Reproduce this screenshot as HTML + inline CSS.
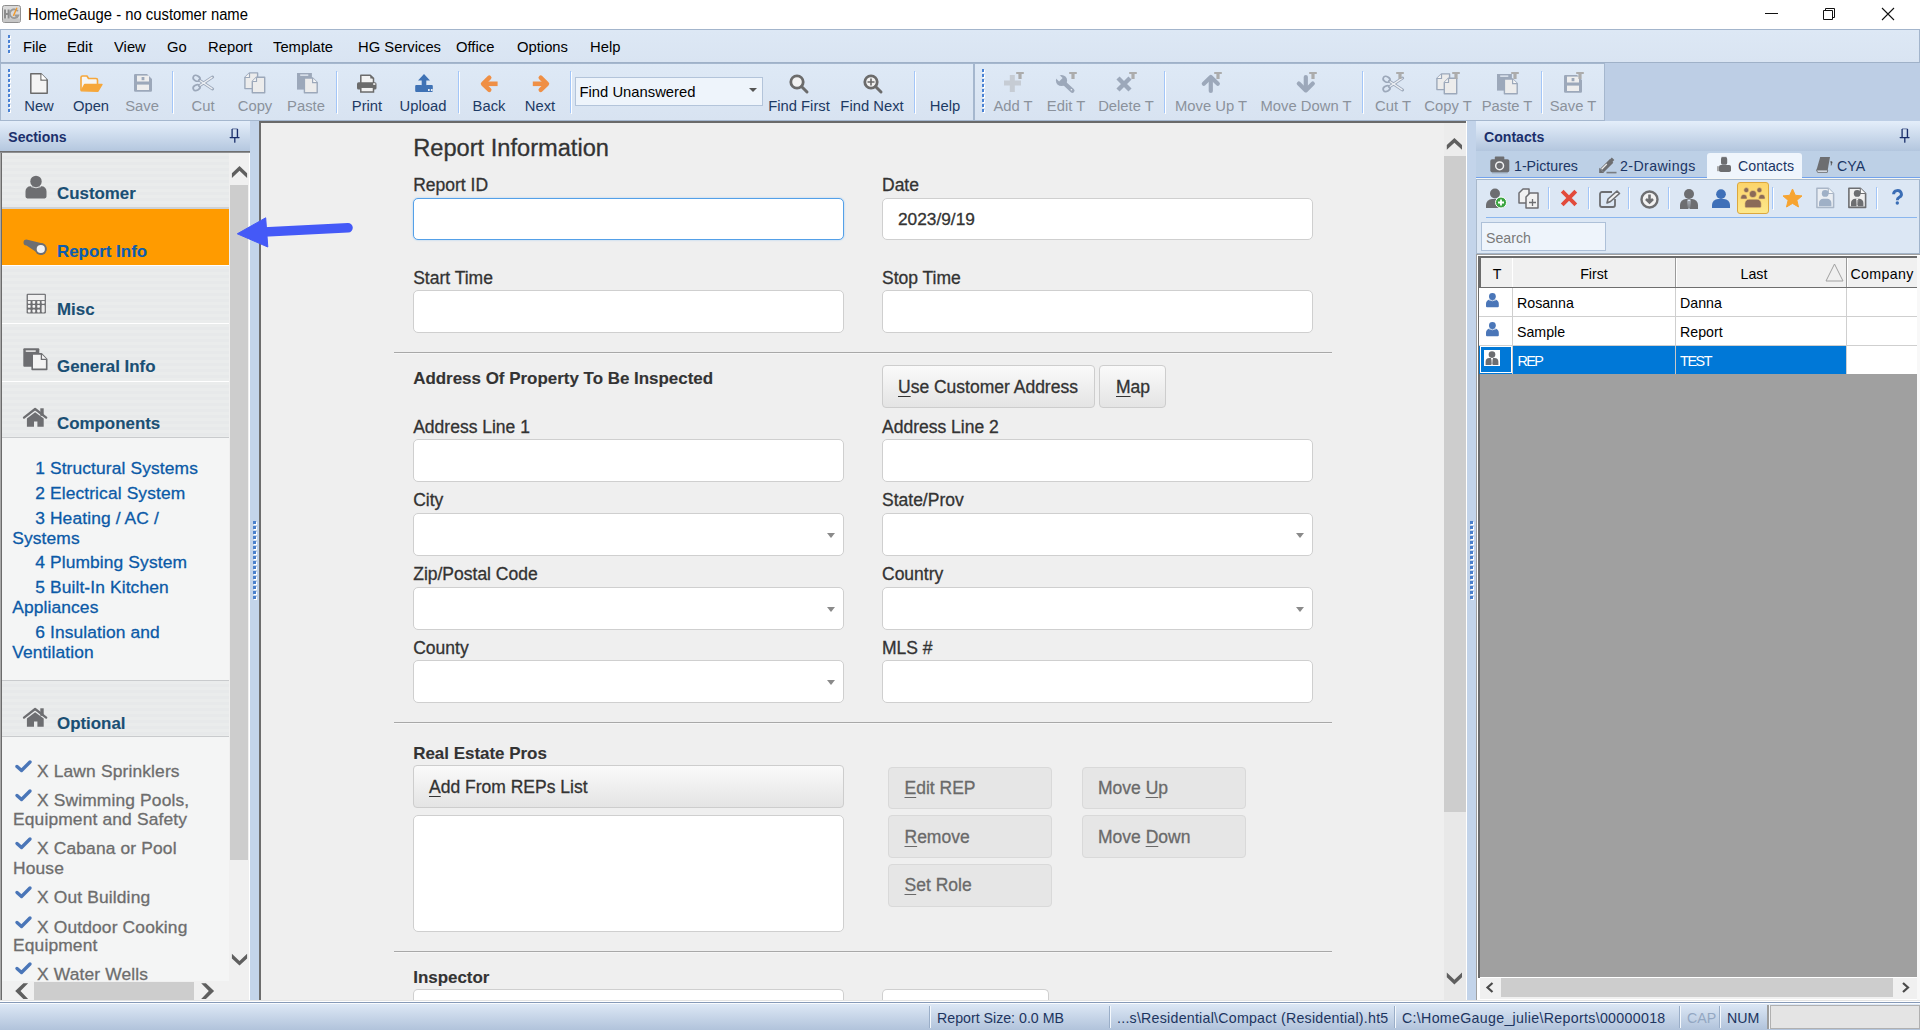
<!DOCTYPE html><html><head><meta charset="utf-8"><style>
html,body{margin:0;padding:0;width:1920px;height:1030px;overflow:hidden;background:#f0f0f0;}
body{position:relative;font-family:"Liberation Sans",sans-serif;}
.t{position:absolute;white-space:nowrap;line-height:1;}
.r{position:absolute;box-sizing:border-box;}
svg.r{overflow:visible}
</style></head><body>
<div class="r" style="left:0px;top:0px;width:1920px;height:29px;background:#fff"></div>
<svg class="r" style="left:2px;top:5px" width="20" height="18" viewBox="0 0 20 18"><rect x="0.5" y="0.5" width="18" height="17" rx="2" fill="#dadada" stroke="#8f8f8f"/><rect x="1" y="13.5" width="17" height="3.5" rx="1" fill="#c6c6c6"/><path d="M3 4.5v9M6.6 4.5v9M3 9h3.6" stroke="#8c8c8c" stroke-width="2"/><path d="M15.8 6.2A4.4 4.4 0 1 0 16.2 10.5H12.8" fill="none" stroke="#9a9a9a" stroke-width="1.9"/><path d="M11.4 10.9L14.9 2.8" stroke="#f39a2a" stroke-width="1.4"/></svg>
<div class="t" style="left:27.5px;top:6.97px;font-size:15.5715px;color:#000;transform:scaleX(0.9524);transform-origin:left top;">HomeGauge - no customer name</div>
<div class="r" style="left:1765px;top:13px;width:13px;height:1px;background:#111"></div>
<svg class="r" style="left:1822px;top:6px" width="15" height="15" viewBox="0 0 15 15"><path d="M1.5 4.5h9v9h-9z M3.5 4.5v-2h9v9h-2" fill="none" stroke="#111" stroke-width="1"/></svg>
<svg class="r" style="left:1881px;top:6.5px" width="15" height="15" viewBox="0 0 15 15"><path d="M1 1L13 13M13 1L1 13" stroke="#111" stroke-width="1.1"/></svg>
<div class="r" style="left:0px;top:29px;width:1920px;height:34px;background:linear-gradient(#dde8f5,#d9e4f2);border-top:1px solid #a3b5cc;border-bottom:1px solid #9fb1c8;border-left:1px solid #a3b5cc;border-right:1px solid #a3b5cc"></div>
<div class="r" style="left:9px;top:36px;width:2px;height:3px;background:#fff"></div>
<div class="r" style="left:8px;top:35px;width:2px;height:3px;background:#4a82d4"></div>
<div class="r" style="left:9px;top:41px;width:2px;height:3px;background:#fff"></div>
<div class="r" style="left:8px;top:40px;width:2px;height:3px;background:#4a82d4"></div>
<div class="r" style="left:9px;top:46px;width:2px;height:3px;background:#fff"></div>
<div class="r" style="left:8px;top:45px;width:2px;height:3px;background:#4a82d4"></div>
<div class="r" style="left:9px;top:51px;width:2px;height:3px;background:#fff"></div>
<div class="r" style="left:8px;top:50px;width:2px;height:3px;background:#4a82d4"></div>
<div class="t" style="left:23px;top:39.00px;font-size:15.540000000000001px;color:#000;transform:scaleX(0.9524);transform-origin:left top;">File</div>
<div class="t" style="left:67px;top:39.00px;font-size:15.540000000000001px;color:#000;transform:scaleX(0.9524);transform-origin:left top;">Edit</div>
<div class="t" style="left:114px;top:39.00px;font-size:15.540000000000001px;color:#000;transform:scaleX(0.9524);transform-origin:left top;">View</div>
<div class="t" style="left:167px;top:39.00px;font-size:15.540000000000001px;color:#000;transform:scaleX(0.9524);transform-origin:left top;">Go</div>
<div class="t" style="left:207.7px;top:39.00px;font-size:15.540000000000001px;color:#000;transform:scaleX(0.9524);transform-origin:left top;">Report</div>
<div class="t" style="left:273.4px;top:39.00px;font-size:15.540000000000001px;color:#000;transform:scaleX(0.9524);transform-origin:left top;">Template</div>
<div class="t" style="left:357.5px;top:39.00px;font-size:15.540000000000001px;color:#000;transform:scaleX(0.9524);transform-origin:left top;">HG Services</div>
<div class="t" style="left:456px;top:39.00px;font-size:15.540000000000001px;color:#000;transform:scaleX(0.9524);transform-origin:left top;">Office</div>
<div class="t" style="left:517px;top:39.00px;font-size:15.540000000000001px;color:#000;transform:scaleX(0.9524);transform-origin:left top;">Options</div>
<div class="t" style="left:590px;top:39.00px;font-size:15.540000000000001px;color:#000;transform:scaleX(0.9524);transform-origin:left top;">Help</div>
<div class="r" style="left:0px;top:63px;width:1920px;height:58px;background:#bdcee5"></div>
<div class="r" style="left:0px;top:63px;width:974px;height:58px;background:linear-gradient(#deE9f6,#d8e3f1);border:1px solid #a5b7ce"></div>
<div class="r" style="left:974px;top:63px;width:631px;height:58px;background:linear-gradient(#dee9f6,#d8e3f1);border:1px solid #a5b7ce"></div>
<div class="r" style="left:9px;top:70px;width:2px;height:3px;background:#fff"></div>
<div class="r" style="left:8px;top:69px;width:2px;height:3px;background:#4a82d4"></div>
<div class="r" style="left:9px;top:75px;width:2px;height:3px;background:#fff"></div>
<div class="r" style="left:8px;top:74px;width:2px;height:3px;background:#4a82d4"></div>
<div class="r" style="left:9px;top:80px;width:2px;height:3px;background:#fff"></div>
<div class="r" style="left:8px;top:79px;width:2px;height:3px;background:#4a82d4"></div>
<div class="r" style="left:9px;top:85px;width:2px;height:3px;background:#fff"></div>
<div class="r" style="left:8px;top:84px;width:2px;height:3px;background:#4a82d4"></div>
<div class="r" style="left:9px;top:90px;width:2px;height:3px;background:#fff"></div>
<div class="r" style="left:8px;top:89px;width:2px;height:3px;background:#4a82d4"></div>
<div class="r" style="left:9px;top:95px;width:2px;height:3px;background:#fff"></div>
<div class="r" style="left:8px;top:94px;width:2px;height:3px;background:#4a82d4"></div>
<div class="r" style="left:9px;top:100px;width:2px;height:3px;background:#fff"></div>
<div class="r" style="left:8px;top:99px;width:2px;height:3px;background:#4a82d4"></div>
<div class="r" style="left:9px;top:105px;width:2px;height:3px;background:#fff"></div>
<div class="r" style="left:8px;top:104px;width:2px;height:3px;background:#4a82d4"></div>
<div class="r" style="left:9px;top:110px;width:2px;height:3px;background:#fff"></div>
<div class="r" style="left:8px;top:109px;width:2px;height:3px;background:#4a82d4"></div>
<div class="r" style="left:983px;top:70px;width:2px;height:3px;background:#fff"></div>
<div class="r" style="left:982px;top:69px;width:2px;height:3px;background:#4a82d4"></div>
<div class="r" style="left:983px;top:75px;width:2px;height:3px;background:#fff"></div>
<div class="r" style="left:982px;top:74px;width:2px;height:3px;background:#4a82d4"></div>
<div class="r" style="left:983px;top:80px;width:2px;height:3px;background:#fff"></div>
<div class="r" style="left:982px;top:79px;width:2px;height:3px;background:#4a82d4"></div>
<div class="r" style="left:983px;top:85px;width:2px;height:3px;background:#fff"></div>
<div class="r" style="left:982px;top:84px;width:2px;height:3px;background:#4a82d4"></div>
<div class="r" style="left:983px;top:90px;width:2px;height:3px;background:#fff"></div>
<div class="r" style="left:982px;top:89px;width:2px;height:3px;background:#4a82d4"></div>
<div class="r" style="left:983px;top:95px;width:2px;height:3px;background:#fff"></div>
<div class="r" style="left:982px;top:94px;width:2px;height:3px;background:#4a82d4"></div>
<div class="r" style="left:983px;top:100px;width:2px;height:3px;background:#fff"></div>
<div class="r" style="left:982px;top:99px;width:2px;height:3px;background:#4a82d4"></div>
<div class="r" style="left:983px;top:105px;width:2px;height:3px;background:#fff"></div>
<div class="r" style="left:982px;top:104px;width:2px;height:3px;background:#4a82d4"></div>
<div class="r" style="left:983px;top:110px;width:2px;height:3px;background:#fff"></div>
<div class="r" style="left:982px;top:109px;width:2px;height:3px;background:#4a82d4"></div>
<div class="r" style="left:172px;top:71px;width:1px;height:42px;background:#a3c6f8"></div>
<div class="r" style="left:173px;top:72px;width:1px;height:42px;background:#fff"></div>
<div class="r" style="left:336px;top:71px;width:1px;height:42px;background:#a3c6f8"></div>
<div class="r" style="left:337px;top:72px;width:1px;height:42px;background:#fff"></div>
<div class="r" style="left:458px;top:71px;width:1px;height:42px;background:#a3c6f8"></div>
<div class="r" style="left:459px;top:72px;width:1px;height:42px;background:#fff"></div>
<div class="r" style="left:570px;top:71px;width:1px;height:42px;background:#a3c6f8"></div>
<div class="r" style="left:571px;top:72px;width:1px;height:42px;background:#fff"></div>
<div class="r" style="left:914px;top:71px;width:1px;height:42px;background:#a3c6f8"></div>
<div class="r" style="left:915px;top:72px;width:1px;height:42px;background:#fff"></div>
<div class="r" style="left:1164px;top:71px;width:1px;height:42px;background:#a3c6f8"></div>
<div class="r" style="left:1165px;top:72px;width:1px;height:42px;background:#fff"></div>
<div class="r" style="left:1362px;top:71px;width:1px;height:42px;background:#a3c6f8"></div>
<div class="r" style="left:1363px;top:72px;width:1px;height:42px;background:#fff"></div>
<div class="r" style="left:1541px;top:71px;width:1px;height:42px;background:#a3c6f8"></div>
<div class="r" style="left:1542px;top:72px;width:1px;height:42px;background:#fff"></div>
<div class="t" style="left:-261px;width:600px;text-align:center;top:98.00px;font-size:15.540000000000001px;color:#1d3a64;transform:scaleX(0.9524);transform-origin:center top;">New</div>
<div class="t" style="left:-209.5px;width:600px;text-align:center;top:98.00px;font-size:15.540000000000001px;color:#1d3a64;transform:scaleX(0.9524);transform-origin:center top;">Open</div>
<div class="t" style="left:-158px;width:600px;text-align:center;top:98.00px;font-size:15.540000000000001px;color:#8b929c;transform:scaleX(0.9524);transform-origin:center top;">Save</div>
<div class="t" style="left:-97px;width:600px;text-align:center;top:98.00px;font-size:15.540000000000001px;color:#8b929c;transform:scaleX(0.9524);transform-origin:center top;">Cut</div>
<div class="t" style="left:-45.5px;width:600px;text-align:center;top:98.00px;font-size:15.540000000000001px;color:#8b929c;transform:scaleX(0.9524);transform-origin:center top;">Copy</div>
<div class="t" style="left:6px;width:600px;text-align:center;top:98.00px;font-size:15.540000000000001px;color:#8b929c;transform:scaleX(0.9524);transform-origin:center top;">Paste</div>
<div class="t" style="left:66.5px;width:600px;text-align:center;top:98.00px;font-size:15.540000000000001px;color:#1d3a64;transform:scaleX(0.9524);transform-origin:center top;">Print</div>
<div class="t" style="left:123px;width:600px;text-align:center;top:98.00px;font-size:15.540000000000001px;color:#1d3a64;transform:scaleX(0.9524);transform-origin:center top;">Upload</div>
<div class="t" style="left:189px;width:600px;text-align:center;top:98.00px;font-size:15.540000000000001px;color:#1d3a64;transform:scaleX(0.9524);transform-origin:center top;">Back</div>
<div class="t" style="left:240px;width:600px;text-align:center;top:98.00px;font-size:15.540000000000001px;color:#1d3a64;transform:scaleX(0.9524);transform-origin:center top;">Next</div>
<div class="t" style="left:499px;width:600px;text-align:center;top:98.00px;font-size:15.540000000000001px;color:#1d3a64;transform:scaleX(0.9524);transform-origin:center top;">Find First</div>
<div class="t" style="left:572px;width:600px;text-align:center;top:98.00px;font-size:15.540000000000001px;color:#1d3a64;transform:scaleX(0.9524);transform-origin:center top;">Find Next</div>
<div class="t" style="left:644.5px;width:600px;text-align:center;top:98.00px;font-size:15.540000000000001px;color:#1d3a64;transform:scaleX(0.9524);transform-origin:center top;">Help</div>
<div class="t" style="left:713px;width:600px;text-align:center;top:98.00px;font-size:15.540000000000001px;color:#8b929c;transform:scaleX(0.9524);transform-origin:center top;">Add T</div>
<div class="t" style="left:766px;width:600px;text-align:center;top:98.00px;font-size:15.540000000000001px;color:#8b929c;transform:scaleX(0.9524);transform-origin:center top;">Edit T</div>
<div class="t" style="left:826px;width:600px;text-align:center;top:98.00px;font-size:15.540000000000001px;color:#8b929c;transform:scaleX(0.9524);transform-origin:center top;">Delete T</div>
<div class="t" style="left:911px;width:600px;text-align:center;top:98.00px;font-size:15.540000000000001px;color:#8b929c;transform:scaleX(0.9524);transform-origin:center top;">Move Up T</div>
<div class="t" style="left:1006px;width:600px;text-align:center;top:98.00px;font-size:15.540000000000001px;color:#8b929c;transform:scaleX(0.9524);transform-origin:center top;">Move Down T</div>
<div class="t" style="left:1093px;width:600px;text-align:center;top:98.00px;font-size:15.540000000000001px;color:#8b929c;transform:scaleX(0.9524);transform-origin:center top;">Cut T</div>
<div class="t" style="left:1148px;width:600px;text-align:center;top:98.00px;font-size:15.540000000000001px;color:#8b929c;transform:scaleX(0.9524);transform-origin:center top;">Copy T</div>
<div class="t" style="left:1207px;width:600px;text-align:center;top:98.00px;font-size:15.540000000000001px;color:#8b929c;transform:scaleX(0.9524);transform-origin:center top;">Paste T</div>
<div class="t" style="left:1273px;width:600px;text-align:center;top:98.00px;font-size:15.540000000000001px;color:#8b929c;transform:scaleX(0.9524);transform-origin:center top;">Save T</div>
<svg class="r" style="left:30px;top:73px" width="18" height="21" viewBox="0 0 18 21"><path d="M0.8 0.8h10.2l6.2 6.2v13.2H0.8z" fill="#f4f4f4" stroke="#6b6b6b" stroke-width="1.5" stroke-linejoin="round"/><path d="M11 0.8v6.2h6.2" fill="#fff" stroke="#6b6b6b" stroke-width="1.3"/><path d="M11.6 1.6v4.8h4.8z" fill="#fff"/></svg>
<svg class="r" style="left:80px;top:75px" width="23" height="17" viewBox="0 0 23 17"><path d="M1 15.5V2.5a1.5 1.5 0 0 1 1.5-1.5h4.5l1.5 2.5h7.5a1.5 1.5 0 0 1 1.5 1.5V9" fill="#f5f5f5" stroke="#f6a73b" stroke-width="1.6" stroke-linejoin="round"/><path d="M1.2 15.8L4.6 9.5H22l-4.2 6.8z" fill="#f6a73b" stroke="#f6a73b" stroke-width="1.4" stroke-linejoin="round"/></svg>
<svg class="r" style="left:134px;top:74px" width="18" height="18" viewBox="0 0 18 18"><path d="M0 1.2A1.2 1.2 0 0 1 1.2 0H13l5 5v11.6a1.2 1.2 0 0 1-1.2 1.2H1.2A1.2 1.2 0 0 1 0 16.6z" fill="#9ca8ba"/><rect x="3" y="1.6" width="12" height="5.9" fill="#eeeeee"/><rect x="7.6" y="3" width="2.8" height="3.2" fill="#9ca8ba"/><rect x="3" y="10.6" width="12" height="5.4" fill="#eeeeee"/></svg>
<svg class="r" style="left:192px;top:74px" width="22" height="18" viewBox="0 0 22 18"><ellipse cx="4.6" cy="4.3" rx="3.6" ry="2.7" transform="rotate(28 4.6 4.3)" fill="none" stroke="#9ca8ba" stroke-width="1.7"/><ellipse cx="4.6" cy="13.6" rx="3.6" ry="2.7" transform="rotate(-28 4.6 13.6)" fill="none" stroke="#9ca8ba" stroke-width="1.7"/><path d="M7.5 11.8L20.6 3M7.5 6.2L20.6 15" stroke="#9ca8ba" stroke-width="3" stroke-linecap="round"/><path d="M8.2 11.2L20 3.4M8.2 6.8L20 14.6" stroke="#eceff3" stroke-width="1.3" stroke-linecap="round"/></svg>
<svg class="r" style="left:244px;top:72px" width="22" height="22" viewBox="0 0 22 22"><path d="M0.9 5.5L5.5 0.9h8.1v15.7H0.9z" fill="#ececec" stroke="#9ca8ba" stroke-width="1.4" stroke-linejoin="round"/><path d="M0.9 5.5h4.6V0.9" fill="#f7f7f7" stroke="#9ca8ba" stroke-width="1.2"/><path d="M8.3 9.5L12.5 5.2h8.2v15.6H8.3z" fill="#ececec" stroke="#9ca8ba" stroke-width="1.4" stroke-linejoin="round"/><path d="M8.3 9.5h4.2V5.2" fill="#f7f7f7" stroke="#9ca8ba" stroke-width="1.2"/></svg>
<svg class="r" style="left:296px;top:72px" width="22" height="22" viewBox="0 0 22 22"><rect x="1" y="1" width="14.9" height="16.6" fill="#9ca8ba"/><rect x="4.2" y="2.4" width="8.1" height="1.5" fill="#dde4ee"/><path d="M8.4 6h8.2l4.6 4.6v10.2H8.4z" fill="#ececec" stroke="#9ca8ba" stroke-width="1.4" stroke-linejoin="round"/><path d="M16.6 6v4.6h4.6" fill="#f7f7f7" stroke="#9ca8ba" stroke-width="1.2"/></svg>
<svg class="r" style="left:356px;top:74px" width="22" height="19" viewBox="0 0 22 19"><path d="M4.8 9V1.2h9.5l3.2 3.2V9" fill="#f2f2f2" stroke="#6b6b6b" stroke-width="1.5" stroke-linejoin="round"/><path d="M14.3 1.2v3.2h3.2z" fill="#6b6b6b"/><rect x="1" y="8.3" width="19.5" height="7.3" rx="1.6" fill="#6b6b6b"/><rect x="17.2" y="9.2" width="2.1" height="1.7" fill="#f2f2f2"/><rect x="4.8" y="13.2" width="12.7" height="4.8" fill="#f2f2f2" stroke="#6b6b6b" stroke-width="1.5"/></svg>
<svg class="r" style="left:414px;top:73px" width="20" height="20" viewBox="0 0 20 20"><path d="M10 0.9L4 7.6h3.7v6.6h4.6V7.6H16z" fill="#3f72b5"/><path d="M1.2 13a1 1 0 0 1 1-1h5.3q2.5 2.4 5 0h5.3a1 1 0 0 1 1 1v5a1 1 0 0 1-1 1H2.2a1 1 0 0 1-1-1z" fill="#3f72b5"/><rect x="14" y="16" width="1.7" height="2" fill="#e8eef6"/><rect x="16.9" y="16" width="1.7" height="2" fill="#e8eef6"/></svg>
<svg class="r" style="left:480px;top:75px" width="18" height="18" viewBox="0 0 18 18"><path d="M9.3 2.7L3 8.8l6.3 6.1" fill="none" stroke="#ef8f45" stroke-width="4.4" stroke-linecap="round" stroke-linejoin="round"/><path d="M4 8.8h13.6" stroke="#ef8f45" stroke-width="4.6" stroke-linecap="butt"/></svg>
<svg class="r" style="left:532px;top:75px" width="18" height="18" viewBox="0 0 18 18"><path d="M8.7 2.7L15 8.8l-6.3 6.1" fill="none" stroke="#ef8f45" stroke-width="4.4" stroke-linecap="round" stroke-linejoin="round"/><path d="M14 8.8H0.8" stroke="#ef8f45" stroke-width="4.6" stroke-linecap="butt"/></svg>
<div class="r" style="left:575px;top:77px;width:188px;height:29px;background:#eef4fb;border:1px solid #b3c4da"></div>
<div class="t" style="left:579.5px;top:84.77px;font-size:14.8px;color:#000;">Find Unanswered</div>
<svg class="r" style="left:749px;top:88px" width="9" height="5" viewBox="0 0 9 5"><path d="M0 0h8L4 4z" fill="#555"/></svg>
<svg class="r" style="left:789px;top:74px" width="20" height="20" viewBox="0 0 20 20"><circle cx="8" cy="8" r="6.2" fill="#f2f2f2" stroke="#6b6b6b" stroke-width="2.8"/><path d="M12.5 12.5L18 18" stroke="#6b6b6b" stroke-width="3" stroke-linecap="round"/></svg>
<svg class="r" style="left:863px;top:74px" width="20" height="20" viewBox="0 0 20 20"><circle cx="8" cy="8" r="6.2" fill="#f2f2f2" stroke="#6b6b6b" stroke-width="2.8"/><path d="M12.5 12.5L18 18" stroke="#6b6b6b" stroke-width="3" stroke-linecap="round"/><path d="M8 4.5v7M4.5 8h7" stroke="#6b6b6b" stroke-width="1.6"/></svg>
<svg class="r" style="left:1003px;top:74px" width="19" height="19" viewBox="0 0 19 19"><path d="M9.3 1v17M1 9h17" stroke="#c6ccd4" stroke-width="5" stroke-linecap="butt"/></svg>
<svg class="r" style="left:1016px;top:72px" width="9" height="8" viewBox="0 0 9 8"><path d="M0.2 0.1h7.6v2H5.6v5H2.4v-5H0.2z" fill="#acacac"/></svg>
<svg class="r" style="left:1055px;top:74px" width="21" height="20" viewBox="0 0 21 20"><path d="M8.5 8.5L17.3 16.7" stroke="#9ca8ba" stroke-width="4.4" stroke-linecap="round"/><circle cx="6.5" cy="6.5" r="5.6" fill="#9ca8ba"/><path d="M0 3.5L3.5 0 7.6 4.1 4.1 7.6z" fill="#dce7f4"/><circle cx="16.4" cy="15.8" r="0.8" fill="#eef2f7"/></svg>
<svg class="r" style="left:1069px;top:72px" width="9" height="8" viewBox="0 0 9 8"><path d="M0.2 0.1h7.6v2H5.6v5H2.4v-5H0.2z" fill="#acacac"/></svg>
<svg class="r" style="left:1116px;top:76px" width="16" height="16" viewBox="0 0 16 16"><path d="M2 2l12 12M14 2L2 14" stroke="#9ca8ba" stroke-width="4.4" stroke-linecap="butt"/></svg>
<svg class="r" style="left:1129px;top:72px" width="9" height="8" viewBox="0 0 9 8"><path d="M0.2 0.1h7.6v2H5.6v5H2.4v-5H0.2z" fill="#acacac"/></svg>
<svg class="r" style="left:1201px;top:75px" width="19" height="18" viewBox="0 0 19 18"><path d="M2.8 8.8L9.8 2l7 6.8" fill="none" stroke="#9ca8ba" stroke-width="4.2" stroke-linecap="round" stroke-linejoin="round"/><path d="M9.8 3.5v12.5" stroke="#9ca8ba" stroke-width="4.2" stroke-linecap="round"/></svg>
<svg class="r" style="left:1214px;top:72px" width="9" height="8" viewBox="0 0 9 8"><path d="M0.2 0.1h7.6v2H5.6v5H2.4v-5H0.2z" fill="#acacac"/></svg>
<svg class="r" style="left:1296px;top:75px" width="19" height="18" viewBox="0 0 19 18"><path d="M2.8 8.6L9.8 15.4l7-6.8" fill="none" stroke="#9ca8ba" stroke-width="4.2" stroke-linecap="round" stroke-linejoin="round"/><path d="M9.8 14V2" stroke="#9ca8ba" stroke-width="4.2" stroke-linecap="round"/></svg>
<svg class="r" style="left:1309px;top:72px" width="9" height="8" viewBox="0 0 9 8"><path d="M0.2 0.1h7.6v2H5.6v5H2.4v-5H0.2z" fill="#acacac"/></svg>
<svg class="r" style="left:1382px;top:75px" width="22" height="18" viewBox="0 0 22 18"><ellipse cx="4.6" cy="4.3" rx="3.6" ry="2.7" transform="rotate(28 4.6 4.3)" fill="none" stroke="#9ca8ba" stroke-width="1.7"/><ellipse cx="4.6" cy="13.6" rx="3.6" ry="2.7" transform="rotate(-28 4.6 13.6)" fill="none" stroke="#9ca8ba" stroke-width="1.7"/><path d="M7.5 11.8L20.6 3M7.5 6.2L20.6 15" stroke="#9ca8ba" stroke-width="3" stroke-linecap="round"/><path d="M8.2 11.2L20 3.4M8.2 6.8L20 14.6" stroke="#eceff3" stroke-width="1.3" stroke-linecap="round"/></svg>
<svg class="r" style="left:1396px;top:72px" width="9" height="8" viewBox="0 0 9 8"><path d="M0.2 0.1h7.6v2H5.6v5H2.4v-5H0.2z" fill="#acacac"/></svg>
<svg class="r" style="left:1436px;top:73px" width="22" height="22" viewBox="0 0 22 22"><path d="M0.9 5.5L5.5 0.9h8.1v15.7H0.9z" fill="#ececec" stroke="#9ca8ba" stroke-width="1.4" stroke-linejoin="round"/><path d="M0.9 5.5h4.6V0.9" fill="#f7f7f7" stroke="#9ca8ba" stroke-width="1.2"/><path d="M8.3 9.5L12.5 5.2h8.2v15.6H8.3z" fill="#ececec" stroke="#9ca8ba" stroke-width="1.4" stroke-linejoin="round"/><path d="M8.3 9.5h4.2V5.2" fill="#f7f7f7" stroke="#9ca8ba" stroke-width="1.2"/></svg>
<svg class="r" style="left:1452px;top:72px" width="9" height="8" viewBox="0 0 9 8"><path d="M0.2 0.1h7.6v2H5.6v5H2.4v-5H0.2z" fill="#acacac"/></svg>
<svg class="r" style="left:1496px;top:73px" width="22" height="22" viewBox="0 0 22 22"><rect x="1" y="1" width="14.9" height="16.6" fill="#9ca8ba"/><rect x="4.2" y="2.4" width="8.1" height="1.5" fill="#dde4ee"/><path d="M8.4 6h8.2l4.6 4.6v10.2H8.4z" fill="#ececec" stroke="#9ca8ba" stroke-width="1.4" stroke-linejoin="round"/><path d="M16.6 6v4.6h4.6" fill="#f7f7f7" stroke="#9ca8ba" stroke-width="1.2"/></svg>
<svg class="r" style="left:1511px;top:72px" width="9" height="8" viewBox="0 0 9 8"><path d="M0.2 0.1h7.6v2H5.6v5H2.4v-5H0.2z" fill="#acacac"/></svg>
<svg class="r" style="left:1564px;top:75px" width="18" height="18" viewBox="0 0 18 18"><path d="M0 1.2A1.2 1.2 0 0 1 1.2 0H13l5 5v11.6a1.2 1.2 0 0 1-1.2 1.2H1.2A1.2 1.2 0 0 1 0 16.6z" fill="#9ca8ba"/><rect x="3" y="1.6" width="12" height="5.9" fill="#eeeeee"/><rect x="7.6" y="3" width="2.8" height="3.2" fill="#9ca8ba"/><rect x="3" y="10.6" width="12" height="5.4" fill="#eeeeee"/></svg>
<svg class="r" style="left:1576px;top:72px" width="9" height="8" viewBox="0 0 9 8"><path d="M0.2 0.1h7.6v2H5.6v5H2.4v-5H0.2z" fill="#acacac"/></svg>
<div class="r" style="left:0px;top:121px;width:250px;height:31px;background:linear-gradient(#e4eefa,#b3c6de)"></div>
<div class="t" style="left:8.3px;top:130.35px;font-size:14.0px;color:#1b2f6b;font-weight:bold;">Sections</div>
<svg class="r" style="left:229.5px;top:128.2px" width="10" height="15" viewBox="0 0 10 15"><path d="M2.1 1v8.4M7.4 1v8.4" stroke="#1b2f6b" stroke-width="1.3"/><path d="M7.6 1v8.4" stroke="#1b2f6b" stroke-width="0.8"/><path d="M2 0.9h5.6" stroke="#1b2f6b" stroke-width="1" opacity="0.6"/><path d="M0.2 9.6h8.8" stroke="#1b2f6b" stroke-width="1.4" stroke-linecap="round"/><path d="M4.8 10v4.2" stroke="#1b2f6b" stroke-width="1.3" stroke-linecap="round"/></svg>
<div class="r" style="left:0px;top:151px;width:250px;height:1px;background:#6e6f71"></div>
<div class="r" style="left:0px;top:152px;width:250px;height:1px;background:#8f9092"></div>
<div class="r" style="left:0px;top:153px;width:1px;height:848px;background:#a9a9a9"></div>
<div class="r" style="left:1px;top:153px;width:1px;height:848px;background:#6b6b6b"></div>
<div class="r" style="left:2px;top:153px;width:228px;height:54px;background:repeating-linear-gradient(#eaecec 0px,#eaecec 3px,#e7e9ea 3px,#e7e9ea 6px)"></div>
<div class="r" style="left:2px;top:207px;width:228px;height:2px;background:#cdd1d6"></div>
<div class="r" style="left:2px;top:209px;width:228px;height:56px;background:#ff9b00"></div>
<div class="r" style="left:2px;top:265px;width:228px;height:1px;background:#fff"></div>
<div class="r" style="left:2px;top:266px;width:228px;height:57px;background:repeating-linear-gradient(#eaecec 0px,#eaecec 3px,#e7e9ea 3px,#e7e9ea 6px)"></div>
<div class="r" style="left:2px;top:323px;width:228px;height:1px;background:#fff"></div>
<div class="r" style="left:2px;top:324px;width:228px;height:57px;background:repeating-linear-gradient(#eaecec 0px,#eaecec 3px,#e7e9ea 3px,#e7e9ea 6px)"></div>
<div class="r" style="left:2px;top:381px;width:228px;height:1px;background:#fff"></div>
<div class="r" style="left:2px;top:382px;width:228px;height:55px;background:repeating-linear-gradient(#eaecec 0px,#eaecec 3px,#e7e9ea 3px,#e7e9ea 6px)"></div>
<div class="r" style="left:2px;top:437px;width:228px;height:1px;background:#c9cbcd"></div>
<div class="r" style="left:2px;top:438px;width:228px;height:242px;background:#f4f5f5"></div>
<div class="r" style="left:2px;top:680px;width:228px;height:1px;background:#c9cbcd"></div>
<div class="r" style="left:2px;top:681px;width:228px;height:55px;background:repeating-linear-gradient(#eaecec 0px,#eaecec 3px,#e7e9ea 3px,#e7e9ea 6px)"></div>
<div class="r" style="left:2px;top:736px;width:228px;height:1px;background:#c9cbcd"></div>
<div class="r" style="left:2px;top:737px;width:228px;height:244px;background:#f4f5f5"></div>
<div class="t" style="left:57px;top:186.19px;font-size:16.9px;color:#1a4f74;font-weight:bold;-webkit-text-stroke:0.12px currentColor;">Customer</div>
<div class="t" style="left:57px;top:243.69px;font-size:16.9px;color:#0b5db0;font-weight:bold;-webkit-text-stroke:0.12px currentColor;">Report Info</div>
<div class="t" style="left:57px;top:302.19px;font-size:16.9px;color:#1a4f74;font-weight:bold;-webkit-text-stroke:0.12px currentColor;">Misc</div>
<div class="t" style="left:57px;top:358.79px;font-size:16.9px;color:#1a4f74;font-weight:bold;-webkit-text-stroke:0.12px currentColor;">General Info</div>
<div class="t" style="left:57px;top:415.69px;font-size:16.9px;color:#1a4f74;font-weight:bold;-webkit-text-stroke:0.12px currentColor;">Components</div>
<div class="t" style="left:57px;top:716.19px;font-size:16.9px;color:#1a4f74;font-weight:bold;-webkit-text-stroke:0.12px currentColor;">Optional</div>
<svg class="r" style="left:25px;top:175px" width="22" height="24" viewBox="0 0 22 24"><circle cx="11" cy="6.4" r="5.7" fill="#6d6e71"/><path d="M0.5 16.2a5 5 0 0 1 5-5h11a5 5 0 0 1 5 5v5.4a1.8 1.8 0 0 1-1.8 1.8H2.3a1.8 1.8 0 0 1-1.8-1.8z" fill="#6d6e71"/><path d="M6 11.6q5 2.4 10 0" fill="none" stroke="#e9ebeb" stroke-width="0.9"/></svg>
<svg class="r" style="left:23px;top:238px" width="25" height="19" viewBox="0 0 25 19"><path d="M3.5 1.5L17.8 5.1A5.9 5.9 0 0 1 17.8 16.9L3.5 7.5A3 3 0 0 1 3.5 1.5Z" fill="#6d6e71"/><circle cx="17.8" cy="11" r="5.9" fill="#6d6e71"/><circle cx="17.8" cy="11" r="4.1" fill="#f2f2f2"/></svg>
<svg class="r" style="left:26px;top:293px" width="21" height="21" viewBox="0 0 21 21"><rect x="0.6" y="0.7" width="19.3" height="19.8" rx="1.2" fill="#6d6e71"/><rect x="1.9" y="1.9" width="16.8" height="5.2" fill="#f0f0f0"/><rect x="1.9" y="7.9" width="2.7" height="2.8" rx="0.7" fill="#f4f4f4"/><rect x="1.9" y="12.0" width="2.7" height="2.8" rx="0.7" fill="#f4f4f4"/><rect x="1.9" y="16.6" width="2.7" height="2.8" rx="0.7" fill="#f4f4f4"/><rect x="6.5" y="7.9" width="2.7" height="2.8" rx="0.7" fill="#f4f4f4"/><rect x="6.5" y="12.0" width="2.7" height="2.8" rx="0.7" fill="#f4f4f4"/><rect x="6.5" y="16.6" width="2.7" height="2.8" rx="0.7" fill="#f4f4f4"/><rect x="11.2" y="7.9" width="2.7" height="2.8" rx="0.7" fill="#f4f4f4"/><rect x="11.2" y="12.0" width="2.7" height="2.8" rx="0.7" fill="#f4f4f4"/><rect x="11.2" y="16.6" width="2.7" height="2.8" rx="0.7" fill="#f4f4f4"/><rect x="15.6" y="7.9" width="3.1" height="2.8" rx="0.7" fill="#f4f4f4"/><rect x="15.6" y="12" width="3.1" height="7.4" rx="0.8" fill="#ececec"/></svg>
<svg class="r" style="left:23px;top:348px" width="25" height="24" viewBox="0 0 25 24"><rect x="0.3" y="0.3" width="16" height="18.4" rx="1" fill="#6d6e71"/><rect x="2.5" y="2.3" width="10.5" height="1.6" rx="0.8" fill="#dcdcdc"/><path d="M9.2 5.9h9.3l5.2 5.3v10.2H9.2z" fill="#f4f4f4" stroke="#6d6e71" stroke-width="1.6" stroke-linejoin="round"/><path d="M18.4 6v5.3h5.2" fill="#f8f8f8" stroke="#6d6e71" stroke-width="1.3"/></svg>
<svg class="r" style="left:23px;top:408px" width="25" height="20" viewBox="0 0 25 20"><rect x="17.3" y="0.3" width="3.4" height="7.5" fill="#6d6e71"/><path d="M1 9.6L12.1 1 23.2 9.6" fill="none" stroke="#6d6e71" stroke-width="2.3" stroke-linecap="round" stroke-linejoin="round"/><path d="M3.9 10.6L12.1 4.2 20.7 10.6V18.7h-6.3v-5.2h-3.4v5.2H3.9z" fill="#6d6e71"/></svg>
<svg class="r" style="left:23px;top:708px" width="25" height="20" viewBox="0 0 25 20"><rect x="17.3" y="0.3" width="3.4" height="7.5" fill="#6d6e71"/><path d="M1 9.6L12.1 1 23.2 9.6" fill="none" stroke="#6d6e71" stroke-width="2.3" stroke-linecap="round" stroke-linejoin="round"/><path d="M3.9 10.6L12.1 4.2 20.7 10.6V18.7h-6.3v-5.2h-3.4v5.2H3.9z" fill="#6d6e71"/></svg>
<div class="t" style="left:35.2px;top:460.27px;font-size:17.4px;color:#0b5aa7;-webkit-text-stroke:0.3px currentColor;letter-spacing:0.12px;">1 Structural Systems</div>
<div class="t" style="left:35.2px;top:485.27px;font-size:17.4px;color:#0b5aa7;-webkit-text-stroke:0.3px currentColor;letter-spacing:0.12px;">2 Electrical System</div>
<div class="t" style="left:35.2px;top:510.27px;font-size:17.4px;color:#0b5aa7;-webkit-text-stroke:0.3px currentColor;letter-spacing:0.12px;">3 Heating / AC /</div>
<div class="t" style="left:12.2px;top:530.27px;font-size:17.4px;color:#0b5aa7;-webkit-text-stroke:0.3px currentColor;letter-spacing:0.12px;">Systems</div>
<div class="t" style="left:35.2px;top:554.27px;font-size:17.4px;color:#0b5aa7;-webkit-text-stroke:0.3px currentColor;letter-spacing:0.12px;">4 Plumbing System</div>
<div class="t" style="left:35.2px;top:579.27px;font-size:17.4px;color:#0b5aa7;-webkit-text-stroke:0.3px currentColor;letter-spacing:0.12px;">5 Built-In Kitchen</div>
<div class="t" style="left:12.2px;top:599.27px;font-size:17.4px;color:#0b5aa7;-webkit-text-stroke:0.3px currentColor;letter-spacing:0.12px;">Appliances</div>
<div class="t" style="left:35.2px;top:624.27px;font-size:17.4px;color:#0b5aa7;-webkit-text-stroke:0.3px currentColor;letter-spacing:0.12px;">6 Insulation and</div>
<div class="t" style="left:12.2px;top:644.27px;font-size:17.4px;color:#0b5aa7;-webkit-text-stroke:0.3px currentColor;letter-spacing:0.12px;">Ventilation</div>
<svg class="r" style="left:15px;top:759.5px" width="17" height="13" viewBox="0 0 17 13"><path d="M2 6.5L6.5 10.5 15 2" fill="none" stroke="#4a76b8" stroke-width="3.4" stroke-linecap="round" stroke-linejoin="round"/></svg>
<div class="t" style="left:37px;top:762.77px;font-size:17.4px;color:#6d6d6d;-webkit-text-stroke:0.3px currentColor;letter-spacing:0.15px;">X Lawn Sprinklers</div>
<svg class="r" style="left:15px;top:788.5px" width="17" height="13" viewBox="0 0 17 13"><path d="M2 6.5L6.5 10.5 15 2" fill="none" stroke="#4a76b8" stroke-width="3.4" stroke-linecap="round" stroke-linejoin="round"/></svg>
<div class="t" style="left:37px;top:791.77px;font-size:17.4px;color:#6d6d6d;-webkit-text-stroke:0.3px currentColor;letter-spacing:0.15px;">X Swimming Pools,</div>
<div class="t" style="left:13px;top:811.27px;font-size:17.4px;color:#6d6d6d;-webkit-text-stroke:0.3px currentColor;letter-spacing:0.15px;">Equipment and Safety</div>
<svg class="r" style="left:15px;top:837px" width="17" height="13" viewBox="0 0 17 13"><path d="M2 6.5L6.5 10.5 15 2" fill="none" stroke="#4a76b8" stroke-width="3.4" stroke-linecap="round" stroke-linejoin="round"/></svg>
<div class="t" style="left:37px;top:840.27px;font-size:17.4px;color:#6d6d6d;-webkit-text-stroke:0.3px currentColor;letter-spacing:0.15px;">X Cabana or Pool</div>
<div class="t" style="left:13px;top:859.77px;font-size:17.4px;color:#6d6d6d;-webkit-text-stroke:0.3px currentColor;letter-spacing:0.15px;">House</div>
<svg class="r" style="left:15px;top:886px" width="17" height="13" viewBox="0 0 17 13"><path d="M2 6.5L6.5 10.5 15 2" fill="none" stroke="#4a76b8" stroke-width="3.4" stroke-linecap="round" stroke-linejoin="round"/></svg>
<div class="t" style="left:37px;top:889.27px;font-size:17.4px;color:#6d6d6d;-webkit-text-stroke:0.3px currentColor;letter-spacing:0.15px;">X Out Building</div>
<svg class="r" style="left:15px;top:915.6px" width="17" height="13" viewBox="0 0 17 13"><path d="M2 6.5L6.5 10.5 15 2" fill="none" stroke="#4a76b8" stroke-width="3.4" stroke-linecap="round" stroke-linejoin="round"/></svg>
<div class="t" style="left:37px;top:918.87px;font-size:17.4px;color:#6d6d6d;-webkit-text-stroke:0.3px currentColor;letter-spacing:0.15px;">X Outdoor Cooking</div>
<div class="t" style="left:13px;top:937.27px;font-size:17.4px;color:#6d6d6d;-webkit-text-stroke:0.3px currentColor;letter-spacing:0.15px;">Equipment</div>
<svg class="r" style="left:15px;top:962.4px" width="17" height="13" viewBox="0 0 17 13"><path d="M2 6.5L6.5 10.5 15 2" fill="none" stroke="#4a76b8" stroke-width="3.4" stroke-linecap="round" stroke-linejoin="round"/></svg>
<div class="t" style="left:37px;top:965.67px;font-size:17.4px;color:#6d6d6d;-webkit-text-stroke:0.3px currentColor;letter-spacing:0.15px;">X Water Wells</div>
<div class="r" style="left:2px;top:981px;width:248px;height:20px;background:#f0f0f0"></div>
<div class="r" style="left:229px;top:153px;width:20px;height:828px;background:#f0f0f0"></div>
<div class="r" style="left:230px;top:185px;width:18px;height:675px;background:#cdcdcd"></div>
<svg class="r" style="left:0px;top:0px" width="1" height="1" viewBox="0 0 1 1"><path d="M231.9 173.20000000000002L239.5 166.1L247.1 173.20000000000002V177.9L239.5 170.79999999999998L231.9 177.9Z" fill="#5f5f5f"/></svg>
<svg class="r" style="left:0px;top:0px" width="1" height="1" viewBox="0 0 1 1"><path d="M231.9 958.5000000000001L239.5 965.6L247.1 958.5000000000001V953.8000000000001L239.5 960.9L231.9 953.8000000000001Z" fill="#5f5f5f"/></svg>
<div class="r" style="left:249px;top:153px;width:1px;height:848px;background:#fff"></div>
<div class="r" style="left:34px;top:982px;width:160px;height:18px;background:#cdcdcd"></div>
<svg class="r" style="left:0px;top:0px" width="1" height="1" viewBox="0 0 1 1"><path d="M23.400000000000002 983.2H28.1L20.5 991.1L28.1 999.0H23.400000000000002L15.2 991.1Z" fill="#5f5f5f"/></svg>
<svg class="r" style="left:0px;top:0px" width="1" height="1" viewBox="0 0 1 1"><path d="M205.89999999999998 983.2H201.2L208.8 991.1L201.2 999.0H205.89999999999998L214.1 991.1Z" fill="#5f5f5f"/></svg>
<div class="r" style="left:2px;top:1000px;width:248px;height:1px;background:#e3e3e3"></div>
<div class="r" style="left:250px;top:121px;width:9px;height:881px;background:#c3d4ea"></div>
<div class="r" style="left:1466px;top:121px;width:1px;height:881px;background:#fff"></div>
<div class="r" style="left:1467px;top:121px;width:9px;height:881px;background:#c3d4ea"></div>
<div class="r" style="left:254px;top:522px;width:3px;height:3px;background:#fff"></div>
<div class="r" style="left:253px;top:521px;width:3px;height:3px;background:#4a80cc"></div>
<div class="r" style="left:254px;top:527px;width:3px;height:3px;background:#fff"></div>
<div class="r" style="left:253px;top:526px;width:3px;height:3px;background:#4a80cc"></div>
<div class="r" style="left:254px;top:532px;width:3px;height:3px;background:#fff"></div>
<div class="r" style="left:253px;top:531px;width:3px;height:3px;background:#4a80cc"></div>
<div class="r" style="left:254px;top:537px;width:3px;height:3px;background:#fff"></div>
<div class="r" style="left:253px;top:536px;width:3px;height:3px;background:#4a80cc"></div>
<div class="r" style="left:254px;top:542px;width:3px;height:3px;background:#fff"></div>
<div class="r" style="left:253px;top:541px;width:3px;height:3px;background:#4a80cc"></div>
<div class="r" style="left:254px;top:547px;width:3px;height:3px;background:#fff"></div>
<div class="r" style="left:253px;top:546px;width:3px;height:3px;background:#4a80cc"></div>
<div class="r" style="left:254px;top:552px;width:3px;height:3px;background:#fff"></div>
<div class="r" style="left:253px;top:551px;width:3px;height:3px;background:#4a80cc"></div>
<div class="r" style="left:254px;top:557px;width:3px;height:3px;background:#fff"></div>
<div class="r" style="left:253px;top:556px;width:3px;height:3px;background:#4a80cc"></div>
<div class="r" style="left:254px;top:562px;width:3px;height:3px;background:#fff"></div>
<div class="r" style="left:253px;top:561px;width:3px;height:3px;background:#4a80cc"></div>
<div class="r" style="left:254px;top:567px;width:3px;height:3px;background:#fff"></div>
<div class="r" style="left:253px;top:566px;width:3px;height:3px;background:#4a80cc"></div>
<div class="r" style="left:254px;top:572px;width:3px;height:3px;background:#fff"></div>
<div class="r" style="left:253px;top:571px;width:3px;height:3px;background:#4a80cc"></div>
<div class="r" style="left:254px;top:577px;width:3px;height:3px;background:#fff"></div>
<div class="r" style="left:253px;top:576px;width:3px;height:3px;background:#4a80cc"></div>
<div class="r" style="left:254px;top:582px;width:3px;height:3px;background:#fff"></div>
<div class="r" style="left:253px;top:581px;width:3px;height:3px;background:#4a80cc"></div>
<div class="r" style="left:254px;top:587px;width:3px;height:3px;background:#fff"></div>
<div class="r" style="left:253px;top:586px;width:3px;height:3px;background:#4a80cc"></div>
<div class="r" style="left:254px;top:592px;width:3px;height:3px;background:#fff"></div>
<div class="r" style="left:253px;top:591px;width:3px;height:3px;background:#4a80cc"></div>
<div class="r" style="left:254px;top:597px;width:3px;height:3px;background:#fff"></div>
<div class="r" style="left:253px;top:596px;width:3px;height:3px;background:#4a80cc"></div>
<div class="r" style="left:1471px;top:522px;width:3px;height:3px;background:#fff"></div>
<div class="r" style="left:1470px;top:521px;width:3px;height:3px;background:#4a80cc"></div>
<div class="r" style="left:1471px;top:527px;width:3px;height:3px;background:#fff"></div>
<div class="r" style="left:1470px;top:526px;width:3px;height:3px;background:#4a80cc"></div>
<div class="r" style="left:1471px;top:532px;width:3px;height:3px;background:#fff"></div>
<div class="r" style="left:1470px;top:531px;width:3px;height:3px;background:#4a80cc"></div>
<div class="r" style="left:1471px;top:537px;width:3px;height:3px;background:#fff"></div>
<div class="r" style="left:1470px;top:536px;width:3px;height:3px;background:#4a80cc"></div>
<div class="r" style="left:1471px;top:542px;width:3px;height:3px;background:#fff"></div>
<div class="r" style="left:1470px;top:541px;width:3px;height:3px;background:#4a80cc"></div>
<div class="r" style="left:1471px;top:547px;width:3px;height:3px;background:#fff"></div>
<div class="r" style="left:1470px;top:546px;width:3px;height:3px;background:#4a80cc"></div>
<div class="r" style="left:1471px;top:552px;width:3px;height:3px;background:#fff"></div>
<div class="r" style="left:1470px;top:551px;width:3px;height:3px;background:#4a80cc"></div>
<div class="r" style="left:1471px;top:557px;width:3px;height:3px;background:#fff"></div>
<div class="r" style="left:1470px;top:556px;width:3px;height:3px;background:#4a80cc"></div>
<div class="r" style="left:1471px;top:562px;width:3px;height:3px;background:#fff"></div>
<div class="r" style="left:1470px;top:561px;width:3px;height:3px;background:#4a80cc"></div>
<div class="r" style="left:1471px;top:567px;width:3px;height:3px;background:#fff"></div>
<div class="r" style="left:1470px;top:566px;width:3px;height:3px;background:#4a80cc"></div>
<div class="r" style="left:1471px;top:572px;width:3px;height:3px;background:#fff"></div>
<div class="r" style="left:1470px;top:571px;width:3px;height:3px;background:#4a80cc"></div>
<div class="r" style="left:1471px;top:577px;width:3px;height:3px;background:#fff"></div>
<div class="r" style="left:1470px;top:576px;width:3px;height:3px;background:#4a80cc"></div>
<div class="r" style="left:1471px;top:582px;width:3px;height:3px;background:#fff"></div>
<div class="r" style="left:1470px;top:581px;width:3px;height:3px;background:#4a80cc"></div>
<div class="r" style="left:1471px;top:587px;width:3px;height:3px;background:#fff"></div>
<div class="r" style="left:1470px;top:586px;width:3px;height:3px;background:#4a80cc"></div>
<div class="r" style="left:1471px;top:592px;width:3px;height:3px;background:#fff"></div>
<div class="r" style="left:1470px;top:591px;width:3px;height:3px;background:#4a80cc"></div>
<div class="r" style="left:1471px;top:597px;width:3px;height:3px;background:#fff"></div>
<div class="r" style="left:1470px;top:596px;width:3px;height:3px;background:#4a80cc"></div>
<div class="r" style="left:259px;top:121px;width:1207px;height:879px;background:#efefef;border-top:2px solid #6a6a6a;border-left:2px solid #6d6d6d"></div>
<div class="r" style="left:1444px;top:123px;width:22px;height:877px;background:#e8e8e8"></div>
<div class="r" style="left:1444px;top:123px;width:22px;height:33px;background:#ececec"></div>
<div class="r" style="left:1444px;top:156px;width:22px;height:656px;background:#cdcdcd"></div>
<svg class="r" style="left:0px;top:0px" width="1" height="1" viewBox="0 0 1 1"><path d="M1446.8000000000002 145.10000000000002L1454.4 138L1462.0 145.10000000000002V149.8L1454.4 142.7L1446.8000000000002 149.8Z" fill="#5f5f5f"/></svg>
<svg class="r" style="left:0px;top:0px" width="1" height="1" viewBox="0 0 1 1"><path d="M1446.8000000000002 977.3000000000001L1454.4 984.4L1462.0 977.3000000000001V972.6L1454.4 979.6999999999999L1446.8000000000002 972.6Z" fill="#5f5f5f"/></svg>
<div class="t" style="left:413.2px;top:136.98px;font-size:23.65px;color:#333;-webkit-text-stroke:0.3px currentColor;">Report Information</div>
<div class="t" style="left:413.2px;top:176.69px;font-size:17.5px;color:#333;-webkit-text-stroke:0.3px currentColor;">Report ID</div>
<div class="t" style="left:882px;top:176.69px;font-size:17.5px;color:#333;-webkit-text-stroke:0.3px currentColor;">Date</div>
<div class="r" style="left:413px;top:198px;width:431px;height:42px;background:#fff;border:1.6px solid #54a0e8;border-radius:5px;box-shadow:0 0 2px #9cc8f2"></div>
<div class="r" style="left:882px;top:198px;width:431px;height:42px;background:#fff;border:1px solid #cfcfcf;border-radius:5px"></div>
<div class="t" style="left:898px;top:211.16px;font-size:17.3px;color:#333;-webkit-text-stroke:0.3px currentColor;">2023/9/19</div>
<div class="t" style="left:413.2px;top:269.69px;font-size:17.5px;color:#333;-webkit-text-stroke:0.3px currentColor;">Start Time</div>
<div class="t" style="left:882px;top:269.69px;font-size:17.5px;color:#333;-webkit-text-stroke:0.3px currentColor;">Stop Time</div>
<div class="r" style="left:413px;top:290px;width:431px;height:43px;background:#fff;border:1px solid #cfcfcf;border-radius:5px"></div>
<div class="r" style="left:882px;top:290px;width:431px;height:43px;background:#fff;border:1px solid #cfcfcf;border-radius:5px"></div>
<div class="r" style="left:394px;top:352px;width:938px;height:1px;background:#a8a8a8"></div>
<div class="r" style="left:394px;top:353px;width:938px;height:1px;background:#f6f6f6"></div>
<div class="t" style="left:413.2px;top:370.55px;font-size:16.95px;color:#333;font-weight:bold;-webkit-text-stroke:0.12px currentColor;">Address Of Property To Be Inspected</div>
<div class="r" style="left:882px;top:365px;width:213px;height:43px;background:linear-gradient(#fafafa,#e4e4e4);border:1px solid #cdcdcd;border-radius:4px"></div>
<div class="t" style="left:898px;top:378.69px;font-size:17.5px;color:#333;-webkit-text-stroke:0.3px currentColor;"><u style="text-decoration-thickness:1px;text-underline-offset:2.5px">U</u>se Customer Address</div>
<div class="r" style="left:1099px;top:365px;width:67px;height:43px;background:linear-gradient(#fafafa,#e4e4e4);border:1px solid #cdcdcd;border-radius:4px"></div>
<div class="t" style="left:1116px;top:378.69px;font-size:17.5px;color:#333;-webkit-text-stroke:0.3px currentColor;"><u style="text-decoration-thickness:1px;text-underline-offset:2.5px">M</u>ap</div>
<div class="t" style="left:413.2px;top:418.69px;font-size:17.5px;color:#333;-webkit-text-stroke:0.3px currentColor;">Address Line 1</div>
<div class="t" style="left:882px;top:418.69px;font-size:17.5px;color:#333;-webkit-text-stroke:0.3px currentColor;">Address Line 2</div>
<div class="r" style="left:413px;top:439px;width:431px;height:43px;background:#fff;border:1px solid #cfcfcf;border-radius:5px"></div>
<div class="r" style="left:882px;top:439px;width:431px;height:43px;background:#fff;border:1px solid #cfcfcf;border-radius:5px"></div>
<div class="t" style="left:413.2px;top:491.69px;font-size:17.5px;color:#333;-webkit-text-stroke:0.3px currentColor;">City</div>
<div class="t" style="left:882px;top:491.69px;font-size:17.5px;color:#333;-webkit-text-stroke:0.3px currentColor;">State/Prov</div>
<div class="r" style="left:413px;top:513px;width:431px;height:43px;background:#fff;border:1px solid #cfcfcf;border-radius:5px"></div>
<svg class="r" style="left:827px;top:532.5px" width="9" height="6" viewBox="0 0 9 6"><path d="M0 0h8L4 5z" fill="#8a8a8a"/></svg>
<div class="r" style="left:882px;top:513px;width:431px;height:43px;background:#fff;border:1px solid #cfcfcf;border-radius:5px"></div>
<svg class="r" style="left:1296px;top:532.5px" width="9" height="6" viewBox="0 0 9 6"><path d="M0 0h8L4 5z" fill="#8a8a8a"/></svg>
<div class="t" style="left:413.2px;top:565.69px;font-size:17.5px;color:#333;-webkit-text-stroke:0.3px currentColor;">Zip/Postal Code</div>
<div class="t" style="left:882px;top:565.69px;font-size:17.5px;color:#333;-webkit-text-stroke:0.3px currentColor;">Country</div>
<div class="r" style="left:413px;top:587px;width:431px;height:43px;background:#fff;border:1px solid #cfcfcf;border-radius:5px"></div>
<svg class="r" style="left:827px;top:606.5px" width="9" height="6" viewBox="0 0 9 6"><path d="M0 0h8L4 5z" fill="#8a8a8a"/></svg>
<div class="r" style="left:882px;top:587px;width:431px;height:43px;background:#fff;border:1px solid #cfcfcf;border-radius:5px"></div>
<svg class="r" style="left:1296px;top:606.5px" width="9" height="6" viewBox="0 0 9 6"><path d="M0 0h8L4 5z" fill="#8a8a8a"/></svg>
<div class="t" style="left:413.2px;top:639.69px;font-size:17.5px;color:#333;-webkit-text-stroke:0.3px currentColor;">County</div>
<div class="t" style="left:882px;top:639.69px;font-size:17.5px;color:#333;-webkit-text-stroke:0.3px currentColor;">MLS #</div>
<div class="r" style="left:413px;top:660px;width:431px;height:43px;background:#fff;border:1px solid #cfcfcf;border-radius:5px"></div>
<svg class="r" style="left:827px;top:679.5px" width="9" height="6" viewBox="0 0 9 6"><path d="M0 0h8L4 5z" fill="#8a8a8a"/></svg>
<div class="r" style="left:882px;top:660px;width:431px;height:43px;background:#fff;border:1px solid #cfcfcf;border-radius:5px"></div>
<div class="r" style="left:394px;top:722px;width:938px;height:1px;background:#a8a8a8"></div>
<div class="r" style="left:394px;top:723px;width:938px;height:1px;background:#f6f6f6"></div>
<div class="t" style="left:413.2px;top:745.65px;font-size:16.95px;color:#333;font-weight:bold;-webkit-text-stroke:0.12px currentColor;">Real Estate Pros</div>
<div class="r" style="left:413px;top:765px;width:431px;height:43px;background:linear-gradient(#fafafa,#e4e4e4);border:1px solid #cdcdcd;border-radius:4px"></div>
<div class="t" style="left:429px;top:778.69px;font-size:17.5px;color:#333;-webkit-text-stroke:0.3px currentColor;"><u style="text-decoration-thickness:1px;text-underline-offset:2.5px">A</u>dd From REPs List</div>
<div class="r" style="left:413px;top:815px;width:431px;height:117px;background:#fff;border:1px solid #cfcfcf;border-radius:5px"></div>
<div class="r" style="left:888px;top:767px;width:164px;height:42px;background:#e6e6e6;border:1px solid #d9d9d9;border-radius:4px"></div>
<div class="t" style="left:904.5px;top:779.69px;font-size:17.5px;color:#6a6a6a;-webkit-text-stroke:0.3px currentColor;"><u style="text-decoration-thickness:1px;text-underline-offset:2.5px">E</u>dit REP</div>
<div class="r" style="left:888px;top:815px;width:164px;height:43px;background:#e6e6e6;border:1px solid #d9d9d9;border-radius:4px"></div>
<div class="t" style="left:904.5px;top:828.69px;font-size:17.5px;color:#6a6a6a;-webkit-text-stroke:0.3px currentColor;"><u style="text-decoration-thickness:1px;text-underline-offset:2.5px">R</u>emove</div>
<div class="r" style="left:888px;top:864px;width:164px;height:43px;background:#e6e6e6;border:1px solid #d9d9d9;border-radius:4px"></div>
<div class="t" style="left:904.5px;top:876.69px;font-size:17.5px;color:#6a6a6a;-webkit-text-stroke:0.3px currentColor;"><u style="text-decoration-thickness:1px;text-underline-offset:2.5px">S</u>et Role</div>
<div class="r" style="left:1082px;top:767px;width:164px;height:42px;background:#e6e6e6;border:1px solid #d9d9d9;border-radius:4px"></div>
<div class="t" style="left:1098px;top:779.69px;font-size:17.5px;color:#6a6a6a;-webkit-text-stroke:0.3px currentColor;">Move <u style="text-decoration-thickness:1px;text-underline-offset:2.5px">U</u>p</div>
<div class="r" style="left:1082px;top:815px;width:164px;height:43px;background:#e6e6e6;border:1px solid #d9d9d9;border-radius:4px"></div>
<div class="t" style="left:1098px;top:828.69px;font-size:17.5px;color:#6a6a6a;-webkit-text-stroke:0.3px currentColor;">Move <u style="text-decoration-thickness:1px;text-underline-offset:2.5px">D</u>own</div>
<div class="r" style="left:394px;top:951px;width:938px;height:1px;background:#a8a8a8"></div>
<div class="r" style="left:394px;top:952px;width:938px;height:1px;background:#f6f6f6"></div>
<div class="t" style="left:413.2px;top:969.65px;font-size:16.95px;color:#333;font-weight:bold;-webkit-text-stroke:0.12px currentColor;">Inspector</div>
<div class="r" style="left:413px;top:989px;width:431px;height:12px;background:#fff;border:1px solid #cfcfcf;border-bottom:none;border-radius:5px 5px 0 0"></div>
<div class="r" style="left:882px;top:989px;width:167px;height:12px;background:#fff;border:1px solid #cfcfcf;border-bottom:none;border-radius:5px 5px 0 0"></div>
<div class="r" style="left:1476px;top:121px;width:444px;height:30px;background:linear-gradient(#e4eefa,#b3c6de)"></div>
<div class="t" style="left:1484px;top:129.86px;font-size:14.1px;color:#1b2f6b;font-weight:bold;">Contacts</div>
<svg class="r" style="left:1899.5px;top:128.2px" width="10" height="15" viewBox="0 0 10 15"><path d="M2.1 1v8.4M7.4 1v8.4" stroke="#1b2f6b" stroke-width="1.3"/><path d="M7.6 1v8.4" stroke="#1b2f6b" stroke-width="0.8"/><path d="M2 0.9h5.6" stroke="#1b2f6b" stroke-width="1" opacity="0.6"/><path d="M0.2 9.6h8.8" stroke="#1b2f6b" stroke-width="1.4" stroke-linecap="round"/><path d="M4.8 10v4.2" stroke="#1b2f6b" stroke-width="1.3" stroke-linecap="round"/></svg>
<div class="r" style="left:1476px;top:151px;width:444px;height:27px;background:#bdd0e6"></div>
<div class="r" style="left:1476px;top:177px;width:444px;height:1px;background:#72a2ec"></div>
<div class="r" style="left:1707px;top:153px;width:95px;height:25px;background:#eff5fc;border-radius:3px 3px 0 0"></div>
<div class="r" style="left:1476px;top:178px;width:444px;height:1px;background:#f6f7f4"></div>
<div class="r" style="left:1476px;top:179px;width:444px;height:1px;background:#a5b8ce"></div>
<div class="t" style="left:1514px;top:159.48px;font-size:14.2px;color:#1b3565;">1-Pictures</div>
<div class="t" style="left:1620px;top:159.48px;font-size:14.2px;color:#1b3565;letter-spacing:0.4px;">2-Drawings</div>
<div class="t" style="left:1738px;top:159.48px;font-size:14.2px;color:#1b3565;">Contacts</div>
<div class="t" style="left:1837px;top:159.48px;font-size:14.2px;color:#1b3565;">CYA</div>
<svg class="r" style="left:1490px;top:156px" width="20" height="18" viewBox="0 0 20 18"><rect x="0.3" y="3.2" width="19" height="13.2" rx="1.8" fill="#6d6e71"/><rect x="4.8" y="0.6" width="9.5" height="3.6" rx="0.8" fill="#6d6e71"/><circle cx="9.6" cy="9.8" r="3.9" fill="none" stroke="#f2f2f2" stroke-width="1.5"/><path d="M2 17h15.5" stroke="#9aa8bb" stroke-width="0.8"/></svg>
<svg class="r" style="left:1598px;top:156px" width="20" height="18" viewBox="0 0 20 18"><path d="M4 14.5L13.5 5" stroke="#6d6e71" stroke-width="5.2" stroke-linecap="butt"/><path d="M12.6 2.8l2.5 2.5" stroke="#6d6e71" stroke-width="3.5"/><path d="M3.6 13.2l5.2-5.2" stroke="#eeeeee" stroke-width="1.3"/><path d="M1.2 11.8v5.2h5z" fill="#6d6e71"/><rect x="8.5" y="15.8" width="10" height="1.6" fill="#6d6e71" opacity="0.85"/></svg>
<svg class="r" style="left:1716px;top:156px" width="16" height="17" viewBox="0 0 16 17"><rect x="5" y="1.3" width="6.2" height="7.4" rx="1.6" fill="#6d6e71"/><rect x="5.5" y="0.8" width="5" height="1.6" fill="#6d6e71" opacity="0.7"/><rect x="3" y="9" width="12" height="7" rx="1.8" fill="#6d6e71"/><rect x="1" y="10.2" width="2" height="5" fill="#a9a9a9"/></svg>
<svg class="r" style="left:1815px;top:156px" width="18" height="18" viewBox="0 0 18 18"><path d="M5.2 1h9.8l-2.3 13H1.5z" fill="#6d6e71"/><path d="M1.5 14h11.2l-0.4 2.4H2.6z" fill="#dfe5ee" stroke="#6d6e71" stroke-width="0.9"/><path d="M15.6 5.5l1.5 0.4-1 3.5" stroke="#6d6e71" stroke-width="1"/></svg>
<div class="r" style="left:1476px;top:180px;width:444px;height:74px;background:#dce7f4;border-left:1px solid #a9b9cc;border-right:1px solid #a0b4cc;border-bottom:1px solid #a3b4c8"></div>
<div class="r" style="left:1548px;top:187px;width:1px;height:22px;background:#a3c6f8"></div>
<div class="r" style="left:1549px;top:188px;width:1px;height:22px;background:#fff"></div>
<div class="r" style="left:1588px;top:187px;width:1px;height:22px;background:#a3c6f8"></div>
<div class="r" style="left:1589px;top:188px;width:1px;height:22px;background:#fff"></div>
<div class="r" style="left:1628px;top:187px;width:1px;height:22px;background:#a3c6f8"></div>
<div class="r" style="left:1629px;top:188px;width:1px;height:22px;background:#fff"></div>
<div class="r" style="left:1668px;top:187px;width:1px;height:22px;background:#a3c6f8"></div>
<div class="r" style="left:1669px;top:188px;width:1px;height:22px;background:#fff"></div>
<div class="r" style="left:1772px;top:187px;width:1px;height:22px;background:#a3c6f8"></div>
<div class="r" style="left:1773px;top:188px;width:1px;height:22px;background:#fff"></div>
<div class="r" style="left:1876px;top:187px;width:1px;height:22px;background:#a3c6f8"></div>
<div class="r" style="left:1877px;top:188px;width:1px;height:22px;background:#fff"></div>
<div class="r" style="left:1486px;top:217px;width:431px;height:1px;background:#8ab6ee"></div>
<div class="r" style="left:1737px;top:182px;width:32px;height:32px;background:linear-gradient(#fcd46a,#fde88c);border:1px solid #dca83e;border-radius:3px"></div>
<svg class="r" style="left:1486px;top:188px" width="22" height="21" viewBox="0 0 22 21"><circle cx="9" cy="5.5" r="5" fill="#6d6e71"/><path d="M0 20v-3a6 6 0 0 1 6-6h6a6 6 0 0 1 6 6v3z" fill="#6d6e71"/><circle cx="15" cy="14.5" r="5.5" fill="#3aa43f" stroke="#fff" stroke-width="1"/><path d="M15 11.5v6M12 14.5h6" stroke="#fff" stroke-width="1.8"/></svg>
<svg class="r" style="left:1518px;top:188px" width="22" height="21" viewBox="0 0 22 21"><path d="M1 5l4-4h6v14H1z" fill="#f2f2f2" stroke="#6d6e71" stroke-width="1.5" stroke-linejoin="round"/><path d="M8 9l4-4h8v15H8z" fill="#f2f2f2" stroke="#6d6e71" stroke-width="1.5" stroke-linejoin="round"/><path d="M14.5 11v7M11 14.5h7" stroke="#6d6e71" stroke-width="1.3"/></svg>
<svg class="r" style="left:1561px;top:190px" width="16" height="16" viewBox="0 0 16 16"><path d="M2.6 2.6l10.8 10.8M13.4 2.6L2.6 13.4" stroke="#e24b3c" stroke-width="3.9" stroke-linecap="square"/></svg>
<svg class="r" style="left:1599px;top:190px" width="21" height="18" viewBox="0 0 21 18"><path d="M13 2H3a2 2 0 0 0-2 2v11a2 2 0 0 0 2 2h11a2 2 0 0 0 2-2V9" fill="none" stroke="#6d6e71" stroke-width="1.8"/><path d="M8 13l1-4 9-8 2.5 2.5-9 8z" fill="#f2f2f2" stroke="#6d6e71" stroke-width="1.6" stroke-linejoin="round"/></svg>
<svg class="r" style="left:1640px;top:190px" width="19" height="19" viewBox="0 0 19 19"><circle cx="9.5" cy="9.5" r="8" fill="#f2f2f2" stroke="#6d6e71" stroke-width="2.4"/><path d="M9.5 4.5v7M6 9l3.5 3.5L13 9" fill="none" stroke="#6d6e71" stroke-width="2.6"/></svg>
<svg class="r" style="left:1680px;top:189px" width="18" height="20" viewBox="0 0 18 20"><circle cx="9" cy="5" r="5" fill="#6d6e71"/><path d="M0 20v-4a6 6 0 0 1 6-6h6a6 6 0 0 1 6 6v4z" fill="#6d6e71"/><path d="M7.5 10.5h3l-0.5 9h-2z" fill="#dae5f2"/><path d="M8.5 12h1l0.3 7h-1.6z" fill="#6d6e71"/></svg>
<svg class="r" style="left:1712px;top:189px" width="18" height="19" viewBox="0 0 18 19"><circle cx="9.0" cy="5.130000000000001" r="4.86" fill="#3f70b8"/><path d="M0 19v-3a6 6 0 0 1 6-6h6a6 6 0 0 1 6 6v3z" fill="#3f70b8"/></svg>
<svg class="r" style="left:1739px;top:187px" width="30" height="24" viewBox="0 0 30 24"><g fill="#8b6a58" stroke="#f3cf78" stroke-width="0.6"><circle cx="7.3" cy="3.1" r="2.5"/><circle cx="20.4" cy="3.1" r="2.5"/><path d="M1.8 10.5a3.1 3.1 0 0 1 6.2 0v1.5h-6.2z"/><path d="M19.8 10.5a3.1 3.1 0 0 1 6.2 0v1.5h-6.2z"/><path d="M5.9 19.4v-3a4.2 4.2 0 0 1 4.2-4.2h7.9a4.2 4.2 0 0 1 4.2 4.2v3a1.3 1.3 0 0 1-1.3 1.3H7.2a1.3 1.3 0 0 1-1.3-1.3z"/><circle cx="13.9" cy="7" r="3.6"/></g></svg>
<svg class="r" style="left:1782px;top:188px" width="21" height="20" viewBox="0 0 21 20"><path d="M10.5 1l2.8 6.3 6.7 0.6-5.1 4.4 1.6 6.7-6-3.6-6 3.6 1.6-6.7L1 7.9l6.7-0.6z" fill="#f7a430" stroke="#f7a430" stroke-width="1" stroke-linejoin="round"/></svg>
<svg class="r" style="left:1816px;top:187px" width="19" height="22" viewBox="0 0 19 22"><path d="M0.9 1.2h11.4l5.3 5.3v13.9H0.9z" fill="#eaeef3" stroke="#a9b6c7" stroke-width="1.5" stroke-linejoin="round"/><path d="M12.3 1.2v5.3h5.3" fill="#f6f8fa" stroke="#a9b6c7" stroke-width="1.1"/><circle cx="9.2" cy="6.4" r="3.4" fill="#9fb0c6"/><path d="M3 19.2v-3.2a4.2 4.2 0 0 1 4.2-4.2h4a4.2 4.2 0 0 1 4.2 4.2v3.2z" fill="#9fb0c6"/></svg>
<svg class="r" style="left:1848px;top:187px" width="19" height="22" viewBox="0 0 19 22"><path d="M0.9 1.2h11.4l5.3 5.3v13.9H0.9z" fill="#f0f0f0" stroke="#6d6e71" stroke-width="1.6" stroke-linejoin="round"/><path d="M12.3 1.2v5.3h5.3" fill="#fafafa" stroke="#6d6e71" stroke-width="1.1"/><circle cx="9.2" cy="6.4" r="3.4" fill="#6d6e71"/><path d="M3 19.2v-3.2a4.2 4.2 0 0 1 4.2-4.2h4a4.2 4.2 0 0 1 4.2 4.2v3.2z" fill="#6d6e71"/><path d="M8.2 11.8h2l-0.3 7.4h-1.4z" fill="#f0f0f0"/><path d="M8.9 13h0.6l0.2 5.2h-1z" fill="#6d6e71"/></svg>
<svg class="r" style="left:1890px;top:189px" width="14" height="17" viewBox="0 0 14 17"><path d="M3.6 5.2a3.9 3.6 0 1 1 5.7 3.1c-1.4 0.8-2 1.4-2 2.9" fill="none" stroke="#3a6db5" stroke-width="2.9"/><circle cx="7.3" cy="14" r="1.7" fill="#3a6db5"/></svg>
<div class="r" style="left:1481px;top:222px;width:125px;height:29px;background:#eef4fb;border:1px solid #adc0d8"></div>
<div class="t" style="left:1486px;top:231.48px;font-size:14.2px;color:#7a7a7a;">Search</div>
<div class="r" style="left:1476px;top:254px;width:444px;height:747px;background:#fff;border-top:1px solid #a0a0a0;border-left:1px solid #a0a0a0"></div>
<div class="r" style="left:1478px;top:256px;width:439px;height:722px;background:#a0a0a0;border-top:2px solid #6b6b6b;border-left:2px solid #6b6b6b"></div>
<div class="r" style="left:1479px;top:258px;width:438px;height:30px;background:#f0f0f0"></div>
<div class="r" style="left:1479px;top:258px;width:2px;height:30px;background:#6b6b6b"></div>
<div class="r" style="left:1512px;top:258px;width:1px;height:30px;background:#fff"></div>
<div class="r" style="left:1675px;top:258px;width:1px;height:30px;background:#9a9a9a"></div>
<div class="r" style="left:1676px;top:258px;width:1px;height:30px;background:#fff"></div>
<div class="r" style="left:1846px;top:258px;width:1px;height:30px;background:#9a9a9a"></div>
<div class="r" style="left:1847px;top:258px;width:1px;height:30px;background:#fff"></div>
<div class="r" style="left:1481px;top:287px;width:436px;height:1px;background:#6e6e6e"></div>
<div class="t" style="left:1197px;width:600px;text-align:center;top:266.98px;font-size:14.2px;color:#000;">T</div>
<div class="t" style="left:1294px;width:600px;text-align:center;top:266.98px;font-size:14.2px;color:#000;">First</div>
<div class="t" style="left:1454px;width:600px;text-align:center;top:266.98px;font-size:14.2px;color:#000;">Last</div>
<div class="t" style="left:1850.5px;top:266.98px;font-size:14.2px;color:#000;letter-spacing:0.35px;">Company</div>
<svg class="r" style="left:1825px;top:263px" width="19" height="19" viewBox="0 0 19 19"><path d="M9.5 1L1 18h17z" fill="none" stroke="#a0a0a0" stroke-width="1"/></svg>
<div class="r" style="left:1479px;top:288px;width:438px;height:86px;background:#fff"></div>
<div class="r" style="left:1479px;top:316px;width:438px;height:1px;background:#cfcfcf"></div>
<div class="r" style="left:1479px;top:345px;width:438px;height:1px;background:#cfcfcf"></div>
<div class="r" style="left:1512px;top:288px;width:1px;height:86px;background:#cfcfcf"></div>
<div class="r" style="left:1675px;top:288px;width:1px;height:86px;background:#cfcfcf"></div>
<div class="r" style="left:1846px;top:288px;width:1px;height:86px;background:#cfcfcf"></div>
<div class="r" style="left:1479px;top:346px;width:367px;height:28px;background:#0078d7"></div>
<div class="r" style="left:1480px;top:346px;width:32px;height:27px;border:1px solid #fff"></div>
<div class="r" style="left:1484px;top:350px;width:16px;height:16px;background:#fff"></div>
<svg class="r" style="left:1485px;top:351px" width="14" height="14" viewBox="0 0 14 14"><circle cx="7" cy="3.6" r="3.3" fill="#6d6e71"/><path d="M0.6 14v-3.2a3.8 3.8 0 0 1 3.8-3.8h5.2a3.8 3.8 0 0 1 3.8 3.8V14z" fill="#6d6e71"/><path d="M6 7h2l-0.3 7h-1.4z" fill="#fff"/><path d="M6.6 8.2h0.8l0.2 5h-1.2z" fill="#6d6e71"/></svg>
<svg class="r" style="left:1486px;top:293px" width="14" height="15" viewBox="0 0 14 15"><circle cx="6.4" cy="3.5" r="3.4" fill="#4a76b8"/><path d="M0 13.2v-2.4a4.2 4.2 0 0 1 4.2-4.2h4.4a4.2 4.2 0 0 1 4.2 4.2v2.4a1 1 0 0 1-1 1H1a1 1 0 0 1-1-1z" fill="#4a76b8"/><path d="M2.8 6.8q3.6 2 7.2 0" fill="none" stroke="#fff" stroke-width="0.7"/></svg>
<svg class="r" style="left:1486px;top:322px" width="14" height="15" viewBox="0 0 14 15"><circle cx="6.4" cy="3.5" r="3.4" fill="#4a76b8"/><path d="M0 13.2v-2.4a4.2 4.2 0 0 1 4.2-4.2h4.4a4.2 4.2 0 0 1 4.2 4.2v2.4a1 1 0 0 1-1 1H1a1 1 0 0 1-1-1z" fill="#4a76b8"/><path d="M2.8 6.8q3.6 2 7.2 0" fill="none" stroke="#fff" stroke-width="0.7"/></svg>
<div class="t" style="left:1517px;top:295.78px;font-size:14.2px;color:#000;">Rosanna</div>
<div class="t" style="left:1680px;top:295.78px;font-size:14.2px;color:#000;">Danna</div>
<div class="t" style="left:1517px;top:324.78px;font-size:14.2px;color:#000;">Sample</div>
<div class="t" style="left:1680px;top:324.78px;font-size:14.2px;color:#000;">Report</div>
<div class="t" style="left:1517.5px;top:353.71px;font-size:14.4px;color:#fff;letter-spacing:-1.6px;">REP</div>
<div class="t" style="left:1680px;top:353.71px;font-size:14.4px;color:#fff;letter-spacing:-1.4px;">TEST</div>
<div class="r" style="left:1512px;top:346px;width:1px;height:28px;background:#d3cfcb"></div>
<div class="r" style="left:1675px;top:346px;width:1px;height:28px;background:#c8c8c8"></div>
<div class="r" style="left:1480px;top:977px;width:437px;height:1px;background:#fff"></div>
<div class="r" style="left:1480px;top:978px;width:437px;height:21px;background:#f0f0f0"></div>
<div class="r" style="left:1501px;top:978px;width:392px;height:19px;background:#cdcdcd"></div>
<div class="r" style="left:1917px;top:256px;width:3px;height:745px;background:#f8f8f8"></div>
<svg class="r" style="left:1485px;top:982px" width="10" height="12" viewBox="0 0 10 12"><path d="M7.5 1L2.5 5.5l5 4.5" fill="none" stroke="#4a4a4a" stroke-width="2.2"/></svg>
<svg class="r" style="left:1901px;top:982px" width="10" height="12" viewBox="0 0 10 12"><path d="M2 1l5 4.5-5 4.5" fill="none" stroke="#4a4a4a" stroke-width="2.2"/></svg>
<div class="r" style="left:0px;top:1000px;width:1920px;height:1px;background:#e3e3e3"></div>
<div class="r" style="left:0px;top:1001px;width:1920px;height:1px;background:#fff"></div>
<div class="r" style="left:0px;top:1002px;width:1920px;height:1px;background:#8599b7"></div>
<div class="r" style="left:0px;top:1003px;width:1920px;height:1px;background:#f9fbfe"></div>
<div class="r" style="left:0px;top:1004px;width:1920px;height:26px;background:linear-gradient(#dce7f5,#b1c3db)"></div>
<div class="r" style="left:929px;top:1006px;width:1px;height:22px;background:#9aaec8"></div>
<div class="r" style="left:930px;top:1006px;width:1px;height:22px;background:#f4f8fc"></div>
<div class="r" style="left:1109px;top:1006px;width:1px;height:22px;background:#9aaec8"></div>
<div class="r" style="left:1110px;top:1006px;width:1px;height:22px;background:#f4f8fc"></div>
<div class="r" style="left:1394px;top:1006px;width:1px;height:22px;background:#9aaec8"></div>
<div class="r" style="left:1395px;top:1006px;width:1px;height:22px;background:#f4f8fc"></div>
<div class="r" style="left:1679px;top:1006px;width:1px;height:22px;background:#9aaec8"></div>
<div class="r" style="left:1680px;top:1006px;width:1px;height:22px;background:#f4f8fc"></div>
<div class="r" style="left:1719px;top:1006px;width:1px;height:22px;background:#9aaec8"></div>
<div class="r" style="left:1720px;top:1006px;width:1px;height:22px;background:#f4f8fc"></div>
<div class="t" style="left:937px;top:1010.98px;font-size:14.2px;color:#1d355f;">Report Size: 0.0 MB</div>
<div class="t" style="left:1117px;top:1010.98px;font-size:14.2px;color:#1d355f;letter-spacing:0.25px;">...s\Residential\Compact (Residential).ht5</div>
<div class="t" style="left:1402px;top:1010.98px;font-size:14.2px;color:#1d355f;letter-spacing:0.32px;">C:\HomeGauge_julie\Reports\00000018</div>
<div class="t" style="left:1687px;top:1010.98px;font-size:14.2px;color:#93a7c2;">CAP</div>
<div class="t" style="left:1727px;top:1010.98px;font-size:14.2px;color:#1d355f;">NUM</div>
<div class="r" style="left:1767px;top:1005px;width:2px;height:24px;background:#9c9c9c"></div>
<div class="r" style="left:1769px;top:1005px;width:1px;height:24px;background:#f4f6f8"></div>
<div class="r" style="left:1770px;top:1005px;width:150px;height:24px;background:#e4e4e4;border:1px solid #b0b0b0"></div>
<svg class="r" style="left:230px;top:205px" width="130" height="50" viewBox="0 0 130 50"><path d="M34 27L118 22.8" stroke="#4459f7" stroke-width="9.6" stroke-linecap="round"/><path d="M7.3 28.8L35.7 12.8 37.8 42z" fill="#4459f7" stroke="#4459f7" stroke-width="1" stroke-linejoin="round"/></svg>
</body></html>
